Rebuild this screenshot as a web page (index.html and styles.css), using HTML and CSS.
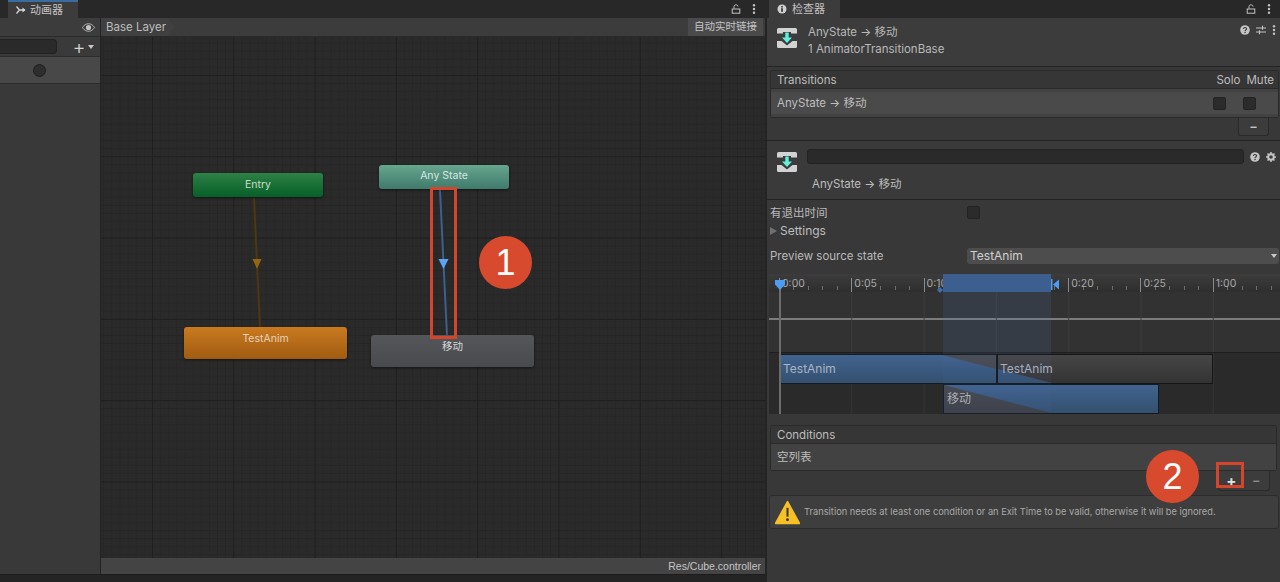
FILE: index.html
```html
<!DOCTYPE html>
<html lang="zh">
<head>
<meta charset="utf-8">
<title>Animator</title>
<link rel="stylesheet" href="styles.css">
</head>
<body>
<svg class="defs" aria-hidden="true">
  <symbol id="lock" viewBox="0 0 10 10"><path d="M3 4.5V2.6C3 1.4 3.9.8 5 .8s2 .6 2 1.8" fill="none" stroke="#c4c4c4" stroke-width="1"/><rect x="1.2" y="5" width="7.6" height="4.2" fill="none" stroke="#c4c4c4" stroke-width="1"/></symbol>
  <symbol id="dots" viewBox="0 0 4 10"><circle cx="2" cy="1.3" r="1.2" fill="#c4c4c4"/><circle cx="2" cy="5" r="1.2" fill="#c4c4c4"/><circle cx="2" cy="8.7" r="1.2" fill="#c4c4c4"/></symbol>
  <symbol id="help" viewBox="0 0 10 10"><circle cx="5" cy="5" r="4.8" fill="#c4c4c4"/><path d="M3.4 3.9C3.5 2.9 4.2 2.5 5 2.5s1.6.5 1.6 1.3c0 1.2-1.5 1.2-1.5 2.3" fill="none" stroke="#383838" stroke-width="1.1"/><rect x="4.4" y="6.8" width="1.3" height="1.3" fill="#383838"/></symbol>
  <symbol id="trans" viewBox="0 0 20 20">
    <path d="M1.5 0h17A1.5 1.5 0 0 1 20 1.500V5.500H14V4H6V5.500H0V1.500A1.500 1.500 0 0 1 1.500 0Z" fill="#d2d2d2"/>
    <path d="M0 13H4.500L10 17.500 15.500 13H20V18.500A1.500 1.500 0 0 1 18.500 20H1.500A1.500 1.500 0 0 1 0 18.500Z" fill="#d2d2d2"/>
    <path d="M8.300 4.500H11.700V9.500H15L10 15 5 9.500H8.300Z" fill="#5ef0dc"/>
  </symbol>
</svg>

<section class="anim">
  <div class="tabstrip">
    <div class="tab tab-anim">
      <svg class="tab-icon" viewBox="0 0 10 10"><path d="M.5 1.500 3.500 5 .5 8.500M3.500 5H9" fill="none" stroke="#d8d8d8" stroke-width="1.300"/><path d="M6.500 2.500 9.500 5 6.500 7.500Z" fill="#d8d8d8"/></svg>
      <span>动画器</span>
    </div>
    <div class="tab-tools">
      <svg class="ic-lock"><use href="#lock"/></svg>
      <svg class="ic-dots"><use href="#dots"/></svg>
    </div>
  </div>
  <div class="anim-body">
    <aside class="side">
      <div class="side-top">
        <svg class="eye" viewBox="0 0 14 9"><path d="M.5 4.500C3 1 5 .5 7 .5s4 .5 6.500 4C11 8 9 8.500 7 8.500S3 8 .5 4.500Z" fill="none" stroke="#c4c4c4"/><circle cx="7" cy="4.500" r="2.800" fill="#c4c4c4"/></svg>
      </div>
      <div class="side-search">
        <div class="search-field"></div>
        <span class="plus">+</span>
        <span class="caret"></span>
      </div>
      <div class="side-row"><span class="dot"></span></div>
    </aside>
    <div class="graph">
      <div class="crumbs">
        <div class="crumb">Base Layer</div>
        <div class="live">自动实时链接</div>
      </div>
      <div class="canvas">
        <svg class="edges" viewBox="0 0 664 521">
          <path class="edge-orange" d="M153 161 159 290"/>
          <path class="head-orange" d="M151.500 222H160.500L156 232Z"/>
          <path class="edge-blue" d="M339 153 346 299"/>
          <path class="head-blue" d="M337.500 222H347.500L342.500 232Z"/>
        </svg>
        <div class="node node-entry">Entry</div>
        <div class="node node-any">Any State</div>
        <div class="node node-anim">TestAnim</div>
        <div class="node node-move">移动</div>
      </div>
      <div class="status">Res/Cube.controller</div>
    </div>
  </div>
  <div class="bottomstrip"></div>
</section>

<section class="insp">
  <div class="tabstrip">
    <div class="tab tab-insp">
      <svg class="tab-icon" viewBox="0 0 10 10"><circle cx="5" cy="5" r="4.500" fill="#d0d0d0"/><rect x="4.200" y="4.200" width="1.600" height="3.600" fill="#282828"/><rect x="4.200" y="2.100" width="1.600" height="1.400" fill="#282828"/></svg>
      <span>检查器</span>
    </div>
    <div class="tab-tools">
      <svg class="ic-lock"><use href="#lock"/></svg>
      <svg class="ic-dots"><use href="#dots"/></svg>
    </div>
  </div>

  <header class="head">
    <svg class="big-icon"><use href="#trans"/></svg>
    <div class="head-text">
      <div>AnyState -&gt; 移动</div>
      <div>1 AnimatorTransitionBase</div>
    </div>
    <div class="head-tools">
      <svg class="ic-help"><use href="#help"/></svg>
      <svg class="ic-sliders" viewBox="0 0 10 10"><path d="M0 3H10M0 7H10M6.500 .8V4.800M3.500 5.200V9.200" stroke="#c4c4c4" stroke-width="1.100" fill="none"/></svg>
      <svg class="ic-dots"><use href="#dots"/></svg>
    </div>
  </header>

  <div class="list list-trans">
    <div class="list-head">
      <span>Transitions</span>
      <span class="flags-head"><span>Solo</span><span>Mute</span></span>
    </div>
    <div class="list-row">
      <span>AnyState -&gt; 移动</span>
      <span class="flags"><i class="check"></i><i class="check"></i></span>
    </div>
  </div>
  <div class="list-foot foot-trans"><span class="minus">–</span></div>

  <div class="second">
    <svg class="big-icon"><use href="#trans"/></svg>
    <div class="name-field"></div>
    <svg class="ic-help"><use href="#help"/></svg>
    <svg class="gear" viewBox="0 0 10 10"><circle cx="5" cy="5" r="2.800" fill="none" stroke="#c4c4c4" stroke-width="2"/><path d="M5 0V2M5 8V10M0 5H2M8 5H10M1.500 1.500 2.800 2.800M7.200 7.200 8.500 8.500M1.500 8.500 2.800 7.200M7.200 2.800 8.500 1.500" stroke="#c4c4c4" stroke-width="1.500"/></svg>
    <div class="second-title">AnyState -&gt; 移动</div>
  </div>

  <div class="form">
    <div class="f-row f-exit"><label>有退出时间</label><i class="check"></i></div>
    <div class="f-row f-settings"><span class="tri"></span><span>Settings</span></div>
    <div class="f-row f-preview">
      <label>Preview source state</label>
      <div class="select"><span>TestAnim</span><span class="caret"></span></div>
    </div>
  </div>

  <div class="timeline">
    <div class="ruler">
      <span class="tick">0:00</span><span class="tick">0:05</span><span class="tick">0:10</span><span class="tick">0:15</span><span class="tick">0:20</span><span class="tick">0:25</span><span class="tick">1:00</span>
    </div>
    <div class="tracks"></div>
    <div class="clips"></div>
    <div class="sel-top"></div>
    <div class="sel-mid"></div>
    <div class="clip clip-a"><span class="wedge wedge-a"></span><span class="clip-label">TestAnim</span></div>
    <div class="clip clip-b"><span class="wedge wedge-b"></span><span class="clip-label">TestAnim</span></div>
    <div class="clip clip-c"><span class="wedge wedge-c"></span><span class="clip-label">移动</span></div>
    <div class="sel-low"></div>
    <div class="playline"></div>
    <svg class="marker-start" viewBox="0 0 12 12"><path d="M1 1H11V5.500L6 11 1 5.500Z" fill="#4d9cf0"/></svg>
    <svg class="marker-left" viewBox="0 0 6 8"><path d="M0 4 3 1 6 4 3 7Z" fill="#3f6fa8"/></svg>
    <svg class="marker-right" viewBox="0 0 8 11"><rect width="1.500" height="11" fill="#4d9cf0"/><path d="M8 .5V10.500L2 5.500Z" fill="#4d9cf0"/></svg>
  </div>

  <div class="list list-cond">
    <div class="list-head"><span>Conditions</span></div>
    <div class="list-row"><span>空列表</span></div>
  </div>
  <div class="list-foot foot-cond"><span class="add">+</span><span class="minus">–</span></div>

  <div class="warning">
    <svg class="warn-icon" viewBox="0 0 24 24"><path d="M12 1.500 23.500 22.500H.5Z" fill="#f6c026" stroke="#f6c026" stroke-width="1.500" stroke-linejoin="round"/><path d="M12 7.500V16" stroke="#3a3a3a" stroke-width="2"/><circle cx="12" cy="19" r="1.400" fill="#3a3a3a"/></svg>
    <span>Transition needs at least one condition or an Exit Time to be valid, otherwise it will be ignored.</span>
  </div>
</section>

<div class="mark mark-box-1"></div>
<div class="mark mark-box-2"></div>
<div class="mark badge badge-1">1</div>
<div class="mark badge badge-2">2</div>
</body>
</html>
```

FILE: styles.css
```css
* { box-sizing: border-box; }
html, body { margin: 0; height: 100%; }
body {
  position: relative;
  width: 1280px;
  height: 582px;
  overflow: hidden;
  display: flex;
  background: #383838;
  color: #bdbdbd;
  font: 11.5px/14px Inter, "Noto Sans CJK SC", sans-serif;
}
.defs { position: absolute; width: 0; height: 0; }

/* tabs */
.tabstrip {
  height: 18px;
  flex: none;
  display: flex;
  justify-content: space-between;
  background: #282828;
}
.tab {
  display: flex;
  align-items: center;
  gap: 4px;
  height: 18px;
  background: #3c3c3c;
  color: #c4c4c4;
  font-size: 11px;
}
.tab-anim { margin-left: 8px; width: 70px; padding-left: 8px; border-top: 2px solid #3a6c9f; }
.tab-insp { margin-left: 2px; width: 71px; padding-left: 8px; gap: 5px; }
.tab-icon { width: 10px; height: 10px; }
.tab-tools { display: flex; align-items: center; gap: 11px; padding-right: 9px; }
.ic-lock { width: 10px; height: 10px; }
.ic-dots { width: 4px; height: 10px; }
.ic-help { width: 10px; height: 10px; }

/* animator */
.anim { width: 765px; height: 582px; flex: none; display: flex; flex-direction: column; background: #282828; }
.anim-body { flex: 1; min-height: 0; display: flex; }
.side {
  width: 100px;
  flex: none;
  background: #393939;
  border-right: 0;
  display: flex;
  flex-direction: column;
}
.side-top {
  height: 19px;
  display: flex;
  justify-content: flex-end;
  align-items: center;
  padding-right: 5px;
  background: #3c3c3c;
  border-bottom: 1px solid #2a2a2a;
}
.eye { width: 13px; height: 9px; }
.side-search {
  height: 20px;
  display: flex;
  align-items: center;
  background: #3a3a3a;
  border-bottom: 1px solid #2c2c2c;
}
.search-field {
  width: 57px;
  height: 15px;
  margin-right: 15px;
  background: #2a2a2a;
  border: 1px solid #222;
  border-left: 0;
  border-radius: 0 4px 4px 0;
}
.plus { width: 14px; color: #d4d4d4; font-size: 20px; line-height: 18px; font-weight: 300; text-align: center; }
.caret {
  width: 0; height: 0;
  margin-left: 2px;
  border-left: 3.500px solid transparent;
  border-right: 3.500px solid transparent;
  border-top: 4px solid #c8c8c8;
}
.side-row {
  height: 27px;
  margin-top: 0;
  background: #484848;
  border-bottom: 1px solid #2c2c2c;
  display: flex;
  justify-content: center;
  align-items: center;
  padding-right: 22px;
}
.dot { width: 13px; height: 13px; border-radius: 50%; background: #2e2e2e; border: 1px solid #1e1e1e; }

.graph { flex: 1; min-width: 0; display: flex; flex-direction: column; border-left: 1px solid #232323; }
.crumbs {
  height: 19px;
  flex: none;
  display: flex;
  justify-content: space-between;
  background: #3c3c3c;
  border-bottom: 1px solid #2a2a2a;
}
.crumb {
  position: relative;
  padding: 1px 0 0 5px;
  width: 74px;
  height: 18px;
  color: #bdbdbd;
  line-height: 16px;
  clip-path: polygon(0 0, 90% 0, 100% 50%, 90% 100%, 0 100%);
  background: #404040;
}
.live {
  width: 75px;
  height: 18px;
  margin-right: 2px;
  background: #4a4a4a;
  color: #c4c4c4;
  font-size: 10.500px;
  line-height: 17px;
  text-align: center;
}
.canvas {
  position: relative;
  flex: 1;
  min-height: 0;
  background-color: #2a2a2a;
  background-image:
    linear-gradient(#1f1f1f 1px, transparent 1px),
    linear-gradient(90deg, #1f1f1f 1px, transparent 1px),
    linear-gradient(#262626 1px, transparent 1px),
    linear-gradient(90deg, #262626 1px, transparent 1px);
  background-size: 81.300px 81.300px, 81.300px 81.300px, 8.130px 8.130px, 8.130px 8.130px;
  background-position: 51px 38px, 51px 38px, 51px 38px, 51px 38px;
}
.edges { position: absolute; left: 0; top: 0; width: 664px; height: 521px; }
.edge-orange { stroke: #4d3810; stroke-width: 2; fill: none; }
.head-orange { fill: #94650f; }
.edge-blue { stroke: #39608f; stroke-width: 2; fill: none; }
.head-blue { fill: #5da3f2; }
.node {
  position: absolute;
  border-radius: 3px;
  padding-top: 5px;
  text-align: center;
  color: #d6d6d6;
  font-size: 10.500px;
  box-shadow: 0 1px 3px rgba(0,0,0,.5);
}
.node-entry { left: 92px; top: 136px; width: 130px; height: 24px; background: linear-gradient(#2e8046, #066028); color: #c8dcc8; }
.node-any { left: 278px; top: 128px; width: 130px; height: 24px; background: linear-gradient(#67a68f, #3f7a6b); color: #d6e6e0; padding-top: 4px; }
.node-anim { left: 83px; top: 290px; width: 163px; height: 32px; background: linear-gradient(#ca7a20, #9f5c10); color: #e6d2ba; }
.node-move { left: 270px; top: 298px; width: 163px; height: 32px; background: linear-gradient(#54565a, #484a4d); }
.status {
  height: 16px;
  flex: none;
  background: #444;
  border-top: 0;
  color: #c4c4c4;
  text-align: right;
  padding-right: 4px;
  font: 10.500px/16px "Liberation Sans Narrow", "Liberation Sans", sans-serif;
}
.bottomstrip { height: 8px; flex: none; background: #242424; border-top: 1px solid #1c1c1c; }

/* inspector */
.insp {
  width: 515px;
  height: 582px;
  flex: none;
  display: flex;
  flex-direction: column;
  background: #383838;
  border-left: 2px solid #242424;
}
.insp .tabstrip { margin-left: -2px; }
.insp .tab-insp { margin-left: 4px; }
.head {
  height: 49px;
  flex: none;
  display: flex;
  padding: 10px 0 0 10px;
  background: #3c3c3c;
  border-bottom: 1px solid #232323;
}
.big-icon { width: 20px; height: 20px; flex: none; }
.head-text { margin-left: 11px; margin-top: -4px; line-height: 16.500px; flex: 1; color: #b8b8b8; }
.head-tools { display: flex; align-items: flex-start; gap: 6px; padding: -1px 4px 0 0; margin-top: -3px; margin-right: 4px; }
.ic-sliders { width: 10px; height: 10px; }

.list { flex: none; border: 1px solid #2a2a2a; border-radius: 2px; }
.list-head {
  height: 18px;
  display: flex;
  justify-content: space-between;
  padding: 1px 4px 0 6px;
  background: #363636;
  border-bottom: 1px solid #2a2a2a;
  color: #bdbdbd;
  line-height: 16px;
}
.list-row {
  display: flex;
  justify-content: space-between;
  align-items: center;
  padding: 0 22px 0 6px;
  background: #4a4a4a;
}
.list-trans { margin: 3px 1px 0 3px; }
.list-trans .list-row { height: 28px; border-top: 3px solid #424242; border-bottom: 3px solid #424242; }
.flags-head { display: flex; gap: 6px; }
.flags { display: flex; gap: 17px; }
.check { display: block; width: 13px; height: 13px; border-radius: 2px; background: #2b2b2b; border: 1px solid #232323; }
.list-foot {
  flex: none;
  align-self: flex-end;
  height: 18px;
  display: flex;
  justify-content: center;
  align-items: center;
  background: #3c3c3c;
  border: 1px solid #2a2a2a;
  border-top: 0;
  border-radius: 0 0 3px 3px;
  color: #c4c4c4;
}
.foot-trans { width: 31px; margin-right: 11px; }
.minus { font-size: 12px; font-weight: 700; }

.second {
  position: relative;
  height: 60px;
  flex: none;
  margin-top: 4px;
  display: flex;
  padding: 8px 4px 0 10px;
  border-top: 1px solid #232323;
  border-bottom: 1px solid #232323;
  background: #3a3a3a;
}
.second .big-icon { margin-top: 3px; }
.name-field { width: 438px; height: 15px; margin: 0 6px 0 10px; background: #2a2a2a; border: 1px solid #222; border-radius: 3px; }
.second .ic-help { margin: 3px 6px 0 0; }
.gear { width: 10px; height: 10px; margin-top: 3px; }
.second-title { position: absolute; left: 45px; top: 36px; color: #bdbdbd; }

.form { flex: none; padding: 4px 0 0 3px; }
.f-row { display: flex; align-items: center; }
.f-row label { width: 197px; flex: none; color: #b8b8b8; }
.f-exit { height: 17px; }
.f-settings { height: 20px; gap: 3px; font-size: 12px; }
.tri {
  width: 0; height: 0;
  border-top: 4.500px solid transparent;
  border-bottom: 4.500px solid transparent;
  border-left: 7px solid #707070;
}
.f-preview { height: 25px; padding-top: 4px; }
.select {
  flex: 1;
  height: 16px;
  display: flex;
  justify-content: space-between;
  align-items: center;
  padding: 0 2px 0 3px;
  background: #4d4d4d;
  border-radius: 3px;
  margin-right: 1px;
  color: #d0d0d0;
  font-size: 12px;
}

.timeline {
  position: relative;
  height: 140px;
  flex: none;
  margin-top: 8px;
  margin-left: 2px;
  background: #383838;
  overflow: hidden;
}
.ruler {
  height: 18px;
  display: flex;
  padding-left: 10px;
  background:
    repeating-linear-gradient(90deg, #6c6c6c 0 1px, transparent 1px 14.460px) 10px 12px / 100% 4px no-repeat,
    linear-gradient(#3c3c3c, #2e2e2e);
}
.tick {
  flex: none;
  width: 72.300px;
  height: 14px;
  margin-top: 4px;
  padding-left: 2px;
  border-left: 1px solid #8a8a8a;
  color: #a8a8a8;
  font-size: 10.500px;
  line-height: 12px;
}
.tracks {
  height: 61px;
  background-color: #323232;
  background-image: linear-gradient(90deg, #3c3c3c 1px, transparent 1px), linear-gradient(transparent 26px, #7c7c7c 26px, #7c7c7c 28px, transparent 28px);
  background-size: 72.300px 100%, 100% 100%;
  background-position: 10px 0, 0 0;
  border-bottom: 1px solid #1e1e1e;
  position: relative;
}
.clips {
  height: 61px;
  background-color: #2a2a2a;
  background-image: linear-gradient(90deg, #343434 1px, transparent 1px);
  background-size: 72.300px 100%;
  background-position: 10px 0;
}
.sel-top { position: absolute; left: 174px; top: 0; width: 108px; height: 18px; background: #3d5f90; }
.sel-mid { position: absolute; left: 174px; top: 18px; width: 108px; height: 61px; background: rgba(80,120,180,.16); }
.sel-low { position: absolute; left: 174px; top: 79px; width: 108px; height: 61px; background: rgba(80,120,180,.07); }
.clip {
  position: absolute;
  height: 30px;
  border: 1px solid #141a22;
  color: #a9b4c2;
  font-size: 12px;
  overflow: hidden;
}
.clip-label { position: relative; display: block; padding: 7px 0 0 2px; }
.clip-a { left: 11px; top: 80px; width: 217px; background: linear-gradient(#41638f, #34506f); }
.clip-b { left: 228px; top: 80px; width: 216px; background: linear-gradient(#464646, #333); border-color: #151515; }
.clip-c { left: 174px; top: 110px; width: 216px; background: linear-gradient(#41638f, #34506f); }
.clip-c .clip-label { color: #b4b4b4; padding-left: 3px; }
.wedge { position: absolute; top: 0; height: 100%; }
.wedge-a { right: 0; width: 54px; background: linear-gradient(#4a4c50, #42444a); clip-path: polygon(0 0, 100% 0, 100% 50%); }
.wedge-b { left: 0; width: 54px; background: linear-gradient(#3f5f8a, #34506f); clip-path: polygon(0 50%, 100% 100%, 0 100%); }
.wedge-c { left: 0; width: 108px; background: linear-gradient(#47494e, #3c3f45); clip-path: polygon(0 0, 100% 100%, 0 100%); }
.playline { position: absolute; left: 10px; top: 12px; width: 2px; height: 128px; background: #6c6c6c; }
.marker-start { position: absolute; left: 5px; top: 5px; width: 12px; height: 12px; }
.marker-left { position: absolute; left: 168px; top: 12px; width: 6px; height: 8px; }
.marker-right { position: absolute; left: 282px; top: 5px; width: 8px; height: 11px; }

.list-cond { margin: 11px 3px 0 3px; }
.list-cond .list-row { height: 26px; background: #424242; }
.foot-cond {
  width: 52px;
  height: 20px;
  margin-right: 10px;
  justify-content: flex-start;
  gap: 0;
}
.add { width: 25px; text-align: center; font-size: 15px; font-weight: 700; color: #e0e0e0; }
.foot-cond .minus { width: 26px; text-align: center; color: #8c8c8c; }

.warning {
  flex: none;
  height: 34px;
  margin: 4px 1px 0 2px;
  display: flex;
  align-items: center;
  gap: 4px;
  padding: 0 0 0 5px;
  background: #3e3e3e;
  border: 1px solid #2c2c2c;
  border-radius: 3px;
  color: #a8a8a8;
  font-size: 9.300px;
}
.warn-icon { width: 25px; height: 25px; flex: none; }

/* annotations lying over the editor */
.mark { position: absolute; }
.mark-box-1 { left: 430px; top: 187px; width: 27px; height: 152px; border: 3px solid #d4452b; }
.mark-box-2 { left: 1216px; top: 462px; width: 28px; height: 26px; border: 3px solid #d4452b; }
.badge {
  width: 53px;
  height: 53px;
  border-radius: 50%;
  background: #d84a2e;
  color: #fff;
  text-align: center;
  font: 36px/53px "Liberation Sans", sans-serif;
}
.badge-1 { left: 479px; top: 236px; }
.badge-2 { left: 1146px; top: 450px; }
```
